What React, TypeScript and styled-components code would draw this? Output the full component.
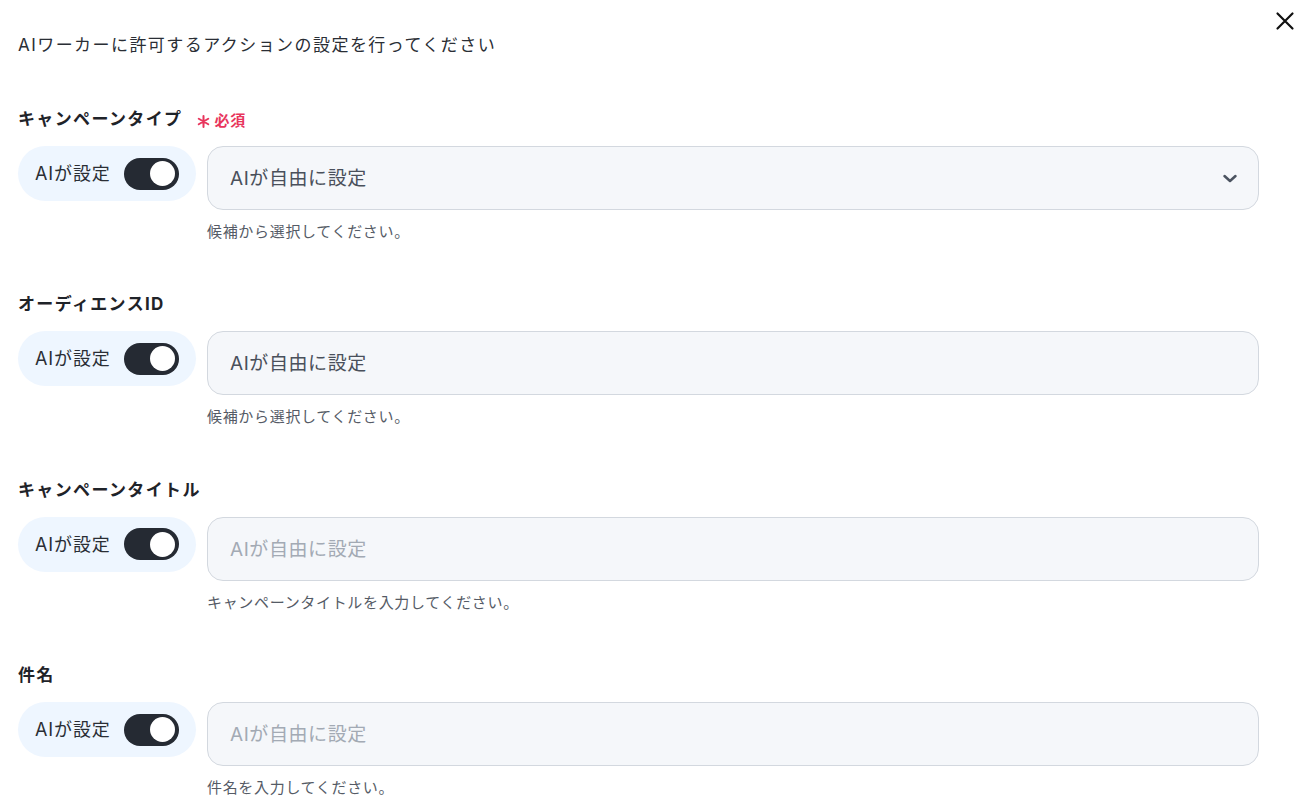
import React from 'react';
import styled, { createGlobalStyle } from 'styled-components';

const GlobalStyle = createGlobalStyle`
  body {
    margin: 0;
    background: #ffffff;
    font-family: Inter, "Noto Sans CJK JP", sans-serif;
    color: #1f2329;
  }
`;

type Field = {
  label: string;
  required?: boolean;
  kind: 'select' | 'text';
  value?: string;
  placeholder: string;
  help: string;
};

const fields: Field[] = [
  { label: 'キャンペーンタイプ', required: true, kind: 'select', value: 'AIが自由に設定', placeholder: 'AIが自由に設定', help: '候補から選択してください。' },
  { label: 'オーディエンスID', kind: 'text', value: 'AIが自由に設定', placeholder: 'AIが自由に設定', help: '候補から選択してください。' },
  { label: 'キャンペーンタイトル', kind: 'text', placeholder: 'AIが自由に設定', help: 'キャンペーンタイトルを入力してください。' },
  { label: '件名', kind: 'text', placeholder: 'AIが自由に設定', help: '件名を入力してください。' },
];

const App = () => {
  return (
    <>
      <GlobalStyle />
      <Panel>
        <CloseButton aria-label="close">
          <svg width="22" height="22" viewBox="0 0 22 22" fill="none">
            <path d="M3.5 3.5L18.5 18.5M18.5 3.5L3.5 18.5" stroke="#111" strokeWidth="2.2" strokeLinecap="round" />
          </svg>
        </CloseButton>
        <Intro>AIワーカーに許可するアクションの設定を行ってください</Intro>
        <FieldList>
          {fields.map((f) => (
            <Section key={f.label}>
              <LabelRow>
                <Label>{f.label}</Label>
                {f.required && (
                  <Required>
                    {/* six-armed required mark */}
                    <svg width="13" height="13" viewBox="0 0 13 13" fill="none">
                      <path
                        d="M6.5 1V12M1.74 3.75L11.26 9.25M11.26 3.75L1.74 9.25"
                        stroke="#e8355c"
                        strokeWidth="2"
                        strokeLinecap="round"
                      />
                    </svg>
                    必須
                  </Required>
                )}
              </LabelRow>
              <Row>
                <AiPill>
                  <PillText>AIが設定</PillText>
                  <Switch $on>
                    <Knob />
                  </Switch>
                </AiPill>
                <InputCol>
                  <InputBox $muted={!f.value}>
                    <span>{f.value ?? f.placeholder}</span>
                    {f.kind === 'select' && (
                      <svg width="18" height="18" viewBox="0 0 18 18" fill="none">
                        <path d="M3.5 7L9 12L14.5 7" stroke="#4b5360" strokeWidth="2.5" strokeLinecap="round" strokeLinejoin="round" />
                      </svg>
                    )}
                  </InputBox>
                  <Help>{f.help}</Help>
                </InputCol>
              </Row>
            </Section>
          ))}
        </FieldList>
      </Panel>
    </>
  );
};

const Panel = styled.div`
  position: relative;
  width: 1306px;
  height: 804px;
  box-sizing: border-box;
  padding: 33px 47px 0 18px;
  overflow: hidden;
`;

const CloseButton = styled.button`
  position: absolute;
  top: 10px;
  right: 10px;
  width: 22px;
  height: 22px;
  padding: 0;
  border: none;
  background: transparent;
  display: flex;
  align-items: center;
  justify-content: center;
`;

const Intro = styled.div`
  font-size: 17px;
  line-height: 24px;
  letter-spacing: 0.085em;
  color: #2a2e35;
`;

const FieldList = styled.div`
  display: flex;
  flex-direction: column;
  gap: 50.4px;
  margin-top: 50px;
`;

const Section = styled.div`
  display: flex;
  flex-direction: column;
  gap: 15px;
`;

const LabelRow = styled.div`
  display: flex;
  align-items: center;
  gap: 15px;
  height: 24px;
`;

const Label = styled.div`
  font-size: 17px;
  line-height: 24px;
  font-weight: 700;
  letter-spacing: 0.08em;
  color: #1f2329;
`;

const Required = styled.div`
  display: flex;
  align-items: center;
  gap: 4px;
  font-size: 15px;
  font-weight: 600;
  color: #e8355c;
  letter-spacing: 0.06em;

  svg {
    margin-top: 4px;
  }
`;

const Row = styled.div`
  display: flex;
  align-items: flex-start;
  gap: 11px;
`;

const AiPill = styled.div`
  display: flex;
  align-items: center;
  justify-content: space-between;
  height: 55px;
  width: 178px;
  box-sizing: border-box;
  padding: 0 17px 0 17px;
  border-radius: 28px;
  background: #eef6ff;
  flex-shrink: 0;
`;

const PillText = styled.span`
  font-size: 18px;
  letter-spacing: 0.05em;
  color: #2a2e35;
  white-space: nowrap;
  padding-bottom: 3px;
`;

const Switch = styled.div<{ $on: boolean }>`
  display: flex;
  align-items: center;
  justify-content: ${({ $on }) => ($on ? 'flex-end' : 'flex-start')};
  width: 55px;
  height: 32px;
  box-sizing: border-box;
  padding: 0 4px;
  border-radius: 16px;
  background: ${({ $on }) => ($on ? '#252a33' : '#c9ced6')};
  flex-shrink: 0;
`;

const Knob = styled.div`
  width: 25px;
  height: 25px;
  border-radius: 50%;
  background: #ffffff;
`;

const InputCol = styled.div`
  display: flex;
  flex-direction: column;
  gap: 12px;
  flex: 1;
`;

const InputBox = styled.div<{ $muted: boolean }>`
  display: flex;
  align-items: center;
  justify-content: space-between;
  height: 64px;
  box-sizing: border-box;
  padding: 0 19px 3px 22px;
  border: 1px solid #d3d8df;
  border-radius: 16px;
  background: #f5f7fa;
  font-size: 19px;
  letter-spacing: 0.03em;
  color: ${({ $muted }) => ($muted ? '#a3aab4' : '#4a505b')};

  svg {
    margin-top: 3px;
  }
`;

const Help = styled.div`
  font-size: 15px;
  line-height: 20px;
  letter-spacing: 0.045em;
  color: #555b66;
`;

export default App;
